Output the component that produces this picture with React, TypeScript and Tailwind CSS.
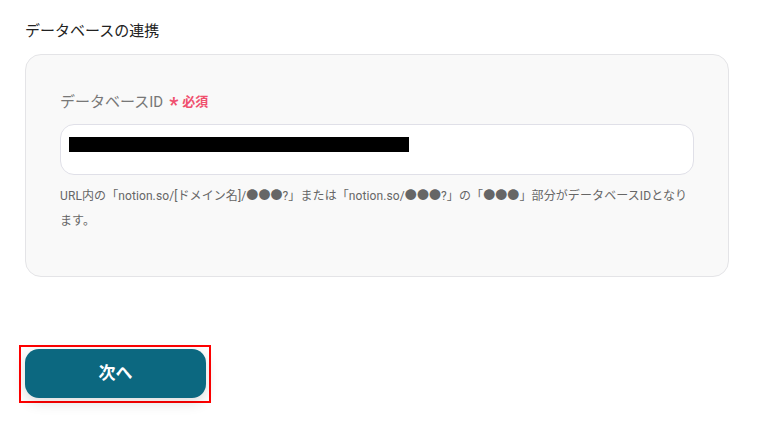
export default function App() {
  return (
    <div
      className="min-h-[421px] w-[761px] bg-white pt-[20px]"
      style={{ fontFamily: 'Roboto, "Noto Sans CJK JP", sans-serif' }}
    >
      <div className="px-[25px]">
        <h2 className="text-[15px] leading-[22px] font-normal text-[#222]">データベースの連携</h2>

        <div className="mt-[12px] w-[704px] h-[223px] rounded-[16px] border border-[#e4e4e7] bg-[#f9f9f9] px-[34px] pt-[36px]">
          <div className="flex items-center gap-[6px] h-[22px]">
            <span className="text-[15px] text-[#777]">データベースID</span>
            <span className="flex items-center gap-[4px] text-[#f0506e]">
              <span className="text-[20px] font-bold leading-none mt-[6px]">*</span>
              <span className="text-[13px] font-bold">必須</span>
            </span>
          </div>

          <div className="mt-[11px] h-[51px] rounded-[14px] border border-[#e0e0e8] bg-white px-[8px] pt-[12px]">
            <div className="h-[15px] w-[340px] bg-black" />
          </div>

          <p className="mt-[9px] text-[12px] leading-[25px] tracking-[0.1px] text-[#666]">
            URL内の「notion.so/[ドメイン名]/●●●?」または「notion.so/●●●?」の「●●●」部分がデータベースIDとなり
            <br />
            ます。
          </p>
        </div>

        <div className="mt-[68px] ml-[-6px] w-[192px] border-2 border-[#ff0000] pl-[4px] pr-[3px] pt-[2px] pb-[3px]">
          <button className="flex h-[49px] w-full items-center justify-center rounded-[14px] bg-[#0c6880] text-[17px] font-bold text-white shadow-[0_4px_14px_rgba(0,0,0,0.15)]">
            次へ
          </button>
        </div>
      </div>
    </div>
  );
}
